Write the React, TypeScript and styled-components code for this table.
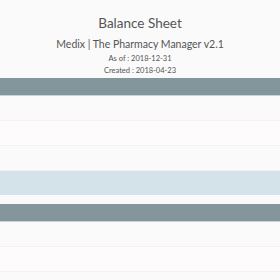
import * as React from 'react';
import styled, { createGlobalStyle } from 'styled-components';

const GlobalStyle = createGlobalStyle`
  body {
    margin: 0;
    background: #fafafa;
    font-family: Lato, 'Open Sans', sans-serif;
  }
`;

const Container = styled.div`
  width: 280px;
  overflow: hidden;
`;
const Header = styled.div`
  display: flex;
  flex-direction: column;
  align-items: center;
  padding: 14px 0 1px;
  color: #555;
`;
const Title = styled.h1`
  margin: 0;
  font-size: 13.5px;
  font-weight: 400;
  line-height: 18px;
  color: #555;
`;
const Company = styled.h2`
  margin: 5px 0 2px;
  font-size: 10.5px;
  font-weight: 400;
  line-height: 14px;
  color: #555;
`;
const Meta = styled.p`
  margin: 0;
  font-size: 7.5px;
  line-height: 12px;
  color: #555;
`;
const Table = styled.div`
  display: flex;
  flex-direction: column;
  margin-bottom: 9px;
`;
const HeadRow = styled.div`
  height: 17px;
  background: #83969b;
  border-bottom: 1px solid #c9d3d6;
`;
const Row = styled.div<{ $alt?: boolean }>`
  height: 24px;
  background: ${p => (p.$alt ? '#fdfbfc' : '#fafafa')};
  border-bottom: 1px solid #f3f1f2;
`;
const TotalRow = styled.div`
  height: 24px;
  background: #d4e2ea;
`;

interface Props {}

const App: React.FC<Props> = () => {
  return (
    <Container>
      <GlobalStyle />
      <Header>
        <Title>Balance Sheet</Title>
        <Company>Medix | The Pharmacy Manager v2.1</Company>
        <Meta>As of : 2018-12-31</Meta>
        <Meta>Created : 2018-04-23</Meta>
      </Header>
      <Table>
        <HeadRow />
        <Row />
        <Row $alt />
        <Row />
        <TotalRow />
      </Table>
      <Table>
        <HeadRow />
        <Row />
        <Row $alt />
        <Row />
      </Table>
    </Container>
  );
};

export default App;
